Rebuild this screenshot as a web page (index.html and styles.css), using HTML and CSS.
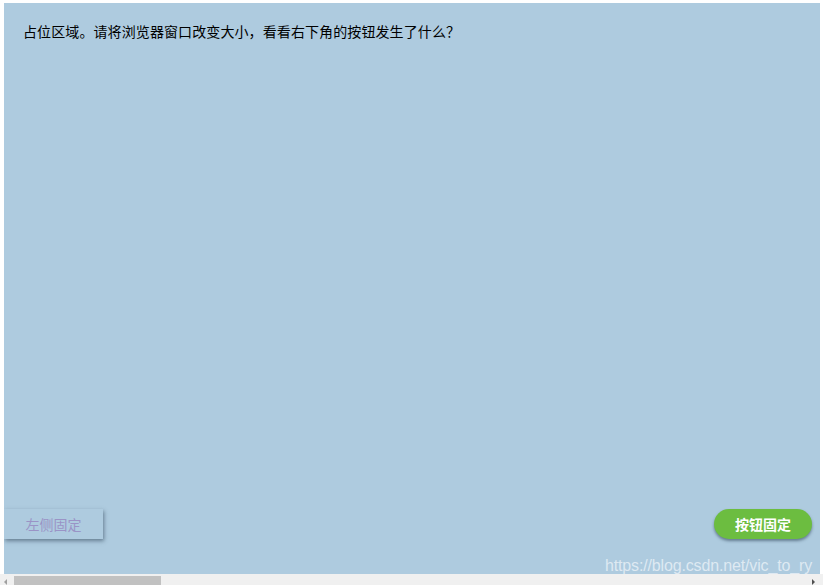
FILE: index.html
```html
<!DOCTYPE html>
<html lang="zh-CN">
<head>
<meta charset="utf-8">
<title>按钮固定</title>
<link rel="stylesheet" href="styles.css">
</head>
<body>
<div class="frame">
  <div class="viewport">
    <p class="intro">占位区域。请将浏览器窗口改变大小，看看右下角的按钮发生了什么？</p>
    <button class="btn-left">左侧固定</button>
    <button class="btn-right">按钮固定</button>
    <span class="watermark">https://blog.csdn.net/vic_to_ry</span>
  </div>
</div>
<div class="hscroll">
  <span class="arrow arrow-left"></span>
  <span class="track"><span class="thumb"></span></span>
  <span class="arrow arrow-right"></span>
</div>
</body>
</html>
```

FILE: styles.css
```css
html, body {
  margin: 0;
  padding: 0;
  background: #ffffff;
  overflow: hidden;
}

body {
  width: 823px;
  height: 585px;
  font-family: "Noto Sans CJK SC", "Liberation Sans", sans-serif;
}

.frame {
  padding: 3px 3px 0 4px;
}

.viewport {
  position: relative;
  height: 571px;
  background: #aecbdf;
  overflow: hidden;
  padding: 18px 19px;
  box-sizing: border-box;
}

.intro {
  margin: 0;
  font-size: 14px;
  line-height: 20px;
  letter-spacing: 0.1px;
  color: #000000;
}

.btn-left,
.btn-right {
  position: absolute;
  bottom: 35px;
  height: 30px;
  border: none;
  font-family: "Noto Sans CJK SC", sans-serif;
  font-size: 14px;
  line-height: 30px;
  padding: 0;
  cursor: pointer;
}

.btn-left {
  left: 0;
  width: 99px;
  background: #aecbdf;
  color: #9a93c6;
  box-shadow: 1px 2px 4px rgba(40, 60, 80, 0.55);
}

.btn-right {
  right: 8px;
  width: 98px;
  border-radius: 15px;
  background: #6cbd40;
  color: #ffffff;
  font-weight: bold;
  box-shadow: 0 2px 3px rgba(40, 60, 80, 0.55);
}

.watermark {
  position: absolute;
  right: 8px;
  bottom: -1px;
  font-family: "Liberation Sans", Arial, sans-serif;
  font-size: 16px;
  line-height: 18px;
  letter-spacing: -0.15px;
  color: rgba(255, 255, 255, 0.6);
  white-space: nowrap;
}

.hscroll {
  display: flex;
  align-items: center;
  height: 11px;
  background: #f0f0f0;
}

.arrow {
  width: 0;
  height: 0;
  border-top: 3px solid transparent;
  border-bottom: 3px solid transparent;
  margin-top: 4px;
}

.arrow-left {
  margin-left: 4px;
  border-right: 3px solid #a0a0a0;
}

.arrow-right {
  margin-right: 8px;
  border-left: 3px solid #505050;
}

.track {
  flex: 1;
  align-self: stretch;
  padding: 2px 0 0 7px;
}

.thumb {
  display: block;
  width: 147px;
  height: 9px;
  background: #c1c1c1;
}
```
